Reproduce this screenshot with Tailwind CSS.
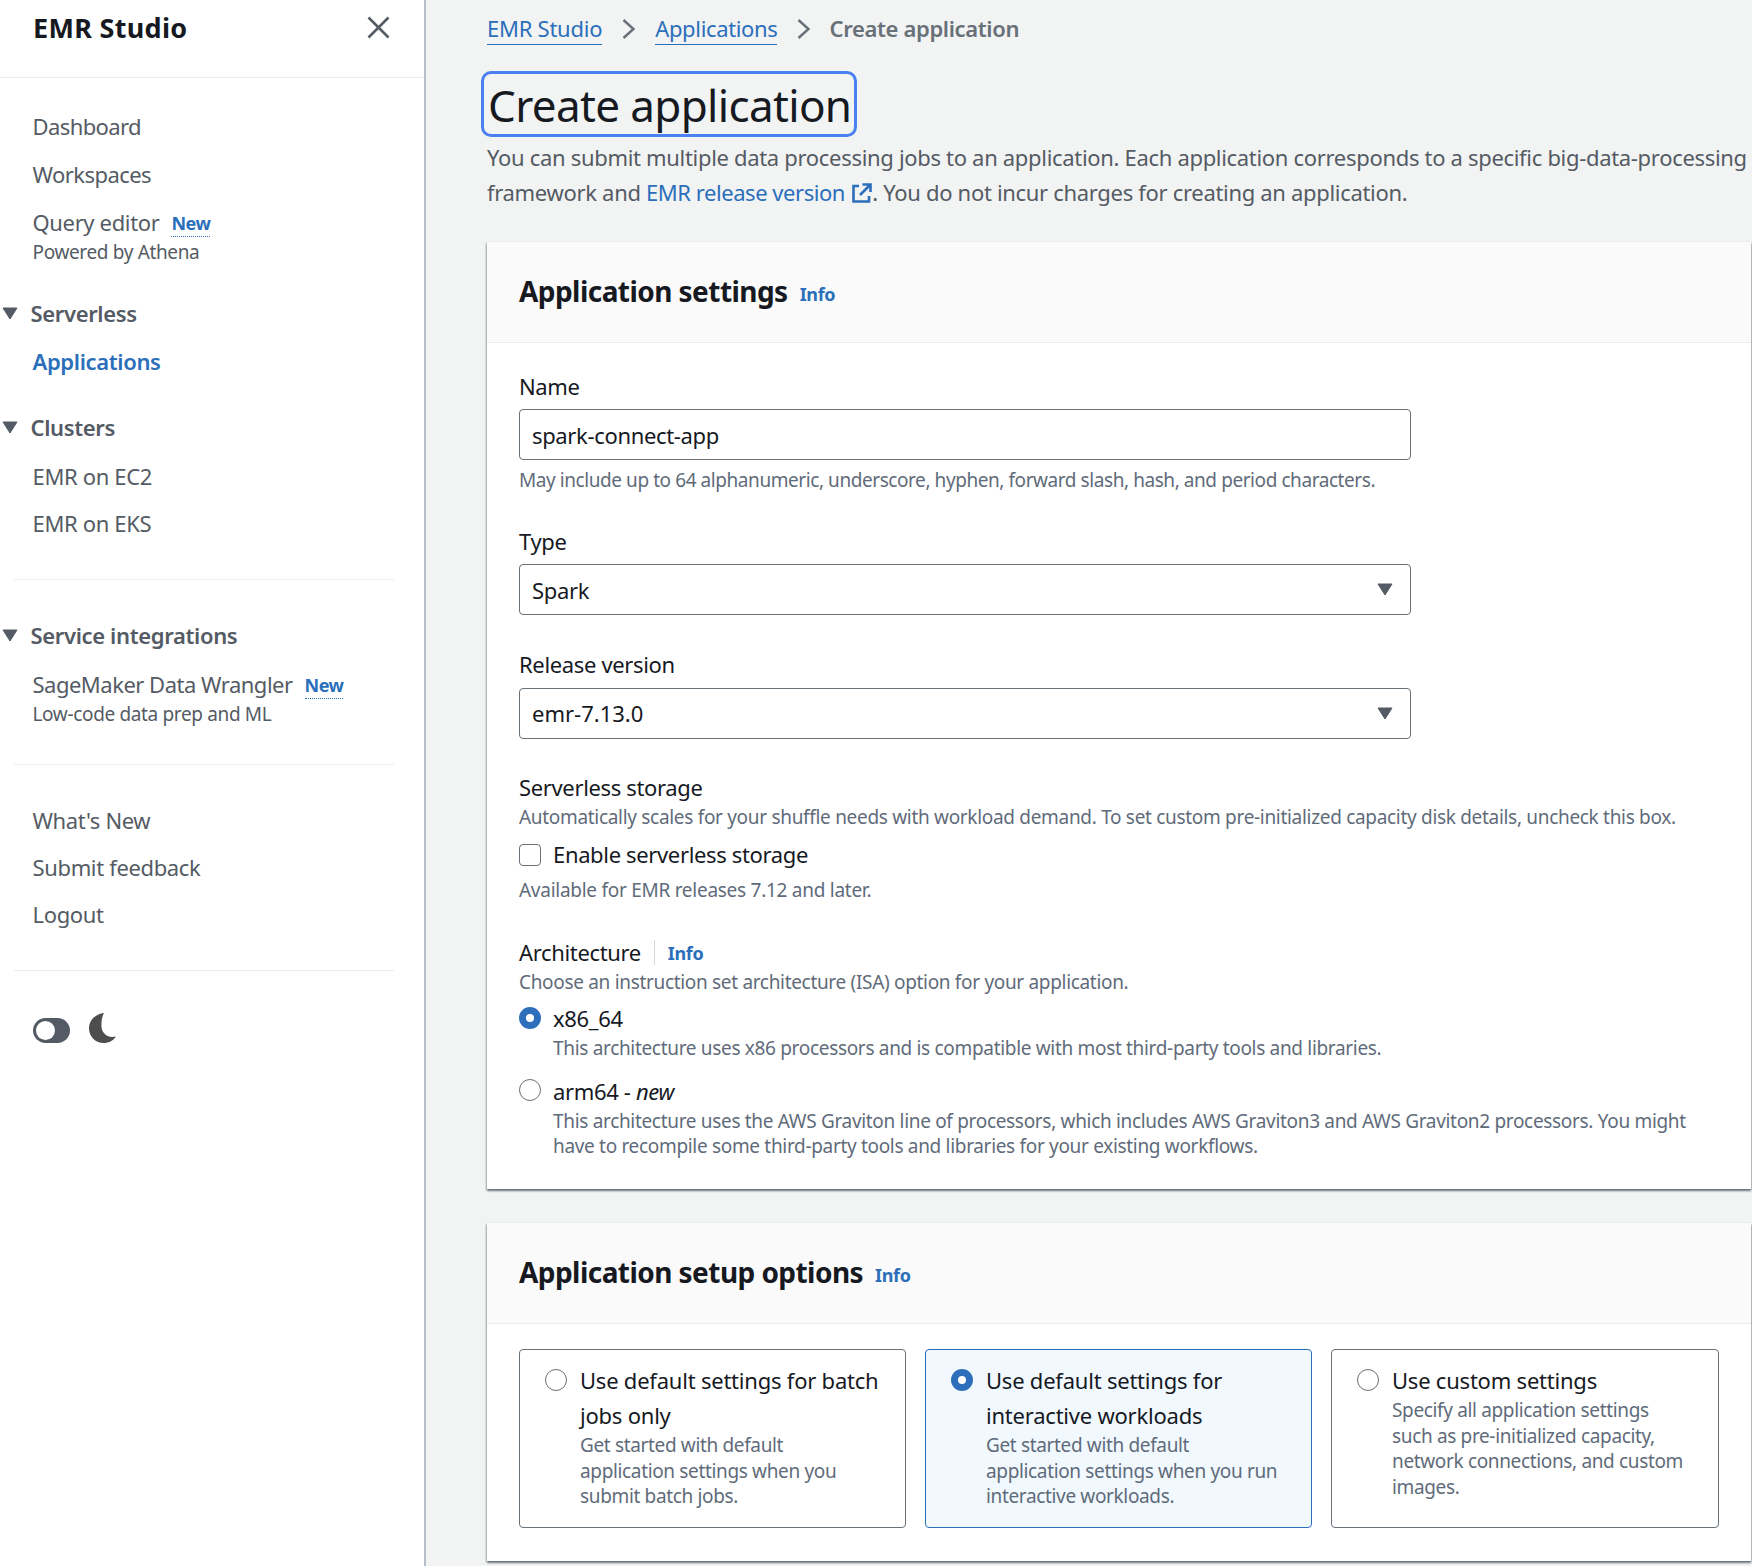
<!DOCTYPE html>
<html lang="en">
<head>
    <meta charset="UTF-8">
    <title>Create application</title>
    <script src="https://cdn.jsdelivr.net/npm/@tailwindcss/browser@4"></script>
</head>
<body class="font-['Noto_Sans',sans-serif] bg-[#f2f3f3] text-[#16191f] text-[22px] leading-[35px] tracking-[-0.35px] overflow-hidden">
<div class="flex h-[1566px] w-[1752px] overflow-hidden">

    <!-- side nav -->
    <aside class="w-[426px] shrink-0 bg-white border-r-2 border-[#b6bec9] text-[#545b64]">
        <div class="h-[78px] border-b border-[#eaeded] pl-[33px] pr-[34px] pt-[10px] flex justify-between items-start">
            <span class="text-[27px] leading-[35px] font-bold tracking-[0.3px] text-[#16191f]">EMR Studio</span>
            <button class="mt-[6px]">
                <svg class="w-[23px] h-[23px]" viewBox="0 0 23 23" fill="none" stroke="#545b64" stroke-width="2.6"><path d="M1.5 1.5l20 20M21.5 1.5l-20 20"/></svg>
            </button>
        </div>

        <nav class="pl-[32.5px] pt-[31px]">
            <a class="block tracking-[-0.6px]">Dashboard</a>
            <a class="block mt-[13px] tracking-[-0.55px]">Workspaces</a>
            <div class="mt-[13px] flex items-start gap-[12px]">
                <a>Query editor</a>
                <span class="text-[18px] font-bold tracking-[-0.5px] text-[#2b6fbb] border-b-[1.5px] border-dotted border-[#2b6fbb] leading-[25px] mt-[6px]">New</span>
            </div>
            <div class="text-[19px] leading-[25px]">Powered by Athena</div>
        </nav>

        <div class="mt-[31px] flex items-center pl-[2px] gap-[12.5px] font-semibold">
            <svg class="w-[16px] h-[13px]" viewBox="0 0 16 13" fill="#545b64" stroke="#545b64" stroke-linejoin="round"><path d="M1 1h14L8 12z"/></svg>
            <span>Serverless</span>
        </div>
        <a class="block mt-[13px] pl-[32.5px] font-semibold text-[#2b6fbb]">Applications</a>

        <div class="mt-[31px] flex items-center pl-[2px] gap-[12.5px] font-semibold">
            <svg class="w-[16px] h-[13px]" viewBox="0 0 16 13" fill="#545b64" stroke="#545b64" stroke-linejoin="round"><path d="M1 1h14L8 12z"/></svg>
            <span>Clusters</span>
        </div>
        <a class="block mt-[14px] pl-[32.5px]">EMR on EC2</a>
        <a class="block mt-[12px] pl-[32.5px]">EMR on EKS</a>

        <div class="mt-[38px] ml-[14px] mr-[30px] border-t border-[#eaeded]"></div>

        <div class="mt-[38px] flex items-center pl-[2px] gap-[12.5px] font-semibold">
            <svg class="w-[16px] h-[13px]" viewBox="0 0 16 13" fill="#545b64" stroke="#545b64" stroke-linejoin="round"><path d="M1 1h14L8 12z"/></svg>
            <span>Service integrations</span>
        </div>
        <div class="mt-[14px] pl-[32.5px] flex items-start gap-[12px]">
            <a class="tracking-[-0.5px]">SageMaker Data Wrangler</a>
            <span class="text-[18px] font-bold tracking-[-0.5px] text-[#2b6fbb] border-b-[1.5px] border-dotted border-[#2b6fbb] leading-[25px] mt-[6px]">New</span>
        </div>
        <div class="pl-[32.5px] text-[19px] leading-[25px]">Low-code data prep and ML</div>

        <div class="mt-[37px] ml-[14px] mr-[30px] border-t border-[#eaeded]"></div>

        <div class="pl-[32.5px] pt-[38px]">
            <a class="block">What's New</a>
            <a class="block mt-[12px]">Submit feedback</a>
            <a class="block mt-[12px]">Logout</a>
        </div>

        <div class="mt-[38px] ml-[14px] mr-[30px] border-t border-[#eaeded]"></div>

        <div class="mt-[43px] pl-[33px] flex items-center gap-[19px]">
            <div class="w-[37px] h-[25px] rounded-full bg-[#545b64] p-[3px] mt-[3px]">
                <div class="w-[19px] h-[19px] rounded-full bg-white"></div>
            </div>
            <svg class="w-[28px] h-[30px] -mt-[1px]" viewBox="0 0 28 30" fill="#4d4d4d"><path d="M15 0C6.500 1 0 7 0 15.500 0 24 7 30 14.500 30c5 0 9.500-2 12.500-6.500-8 2-14-3-14.500-9.500C12.200 8 13 3.500 15 0z"/></svg>
        </div>
    </aside>

    <!-- main content -->
    <main class="flex-1 pl-[61px] pr-px pt-[11px] text-[#545b64]">
        <div class="flex items-center">
            <a class="text-[#2b6fbb] border-b border-[#2b6fbb] leading-[32px] -mt-[1px] tracking-[-0.25px]">EMR Studio</a>
            <svg class="mx-[20px] w-[13px] h-[20px]" viewBox="0 0 13 20" fill="none" stroke="#687078" stroke-width="2.500"><path d="M1.500 1l10 9-10 9"/></svg>
            <a class="text-[#2b6fbb] border-b border-[#2b6fbb] leading-[32px] -mt-[1px]">Applications</a>
            <svg class="mx-[20px] w-[13px] h-[20px]" viewBox="0 0 13 20" fill="none" stroke="#687078" stroke-width="2.500"><path d="M1.500 1l10 9-10 9"/></svg>
            <span class="font-semibold text-[#687078] -ml-[1px]">Create application</span>
        </div>

        <h1 class="mt-[25px] -ml-[6px] w-[376px] h-[66px] border-[3px] border-[#4a80ef] rounded-[10px] pl-[4px] text-[44px] leading-[62px] tracking-[-0.65px] text-[#16191f] whitespace-nowrap">Create application</h1>

        <p class="mt-[3px] whitespace-nowrap tracking-[-0.315px]">You can submit multiple data processing jobs to an application. Each application corresponds to a specific big-data-processing<br>framework and <a class="text-[#2b6fbb] tracking-[-0.45px]">EMR release version <svg class="inline w-[20px] h-[20px] -mt-[4px] ml-[2px]" viewBox="0 0 20 20" fill="none" stroke="#2b6fbb" stroke-width="2.600"><path d="M7 3H1.500v15.500H17V13M10.500 1.500h8V9M18 2L8 12"/></svg></a>. You do not incur charges for creating an application.</p>

        <!-- application settings -->
        <section class="mt-[32px] bg-white shadow-[0_2px_2px_0_rgba(0,28,36,0.45),-1px_1px_2px_0_rgba(0,28,36,0.2),1px_1px_2px_0_rgba(0,28,36,0.2)]">
            <header class="h-[101px] bg-[#fafafa] border-b border-[#eaeded] pl-[32px] pt-[30px] flex items-start gap-[12px]">
                <h2 class="text-[28px] leading-[38px] font-bold tracking-[-0.55px] text-[#16191f]">Application settings</h2>
                <a class="text-[18px] font-bold text-[#2b6fbb] leading-[25px] mt-[10px]">Info</a>
            </header>
            <div class="pl-[32px] pr-[32px] pt-[26px] pb-[30px]">
                <label class="block text-[#16191f]">Name</label>
                <div class="mt-[5px] w-[892px] h-[51px] border-[1.5px] border-[#687078] rounded-[4px] px-[12px] text-[#16191f] leading-[50px]">spark-connect-app</div>
                <p class="mt-[8px] text-[19px] leading-[25px] tracking-[-0.43px] text-[#5f6b7a]">May include up to 64 alphanumeric, underscore, hyphen, forward slash, hash, and period characters.</p>

                <label class="block mt-[31px] text-[#16191f]">Type</label>
                <div class="mt-[5px] w-[892px] h-[51px] border-[1.5px] border-[#687078] rounded-[4px] pl-[12px] pr-[17px] text-[#16191f] leading-[48px] flex justify-between items-center">
                    <span>Spark</span>
                    <svg class="w-[16px] h-[13px]" viewBox="0 0 16 13" fill="#545b64" stroke="#545b64" stroke-linejoin="round"><path d="M1 1h14L8 12z"/></svg>
                </div>

                <label class="block mt-[32px] text-[#16191f]">Release version</label>
                <div class="mt-[6px] w-[892px] h-[51px] border-[1.5px] border-[#687078] rounded-[4px] pl-[12px] pr-[17px] text-[#16191f] leading-[46px] flex justify-between items-center">
                    <span class="-mt-[2px] tracking-[0px]">emr-7.13.0</span>
                    <svg class="w-[16px] h-[13px]" viewBox="0 0 16 13" fill="#545b64" stroke="#545b64" stroke-linejoin="round"><path d="M1 1h14L8 12z"/></svg>
                </div>

                <label class="block mt-[31px] text-[#16191f]">Serverless storage</label>
                <p class="text-[19px] leading-[25px] whitespace-nowrap tracking-[-0.31px] text-[#5f6b7a]">Automatically scales for your shuffle needs with workload demand. To set custom pre-initialized capacity disk details, uncheck this box.</p>
                <div class="mt-[7px] flex items-center gap-[12px] text-[#16191f]">
                    <span class="w-[22px] h-[22px] border-[1.5px] border-[#687078] rounded-[4px]"></span>
                    <span>Enable serverless storage</span>
                </div>
                <p class="mt-[6px] text-[19px] leading-[25px] tracking-[-0.27px] text-[#5f6b7a]">Available for EMR releases 7.12 and later.</p>

                <div class="mt-[32px] flex items-center text-[#16191f]">
                    <span>Architecture</span>
                    <span class="ml-[13px] h-[25px] border-l border-[#d5dbdb]"></span>
                    <a class="ml-[13px] mt-[1px] text-[18px] font-bold text-[#2b6fbb] leading-[25px]">Info</a>
                </div>
                <p class="text-[19px] leading-[25px] tracking-[-0.32px] text-[#5f6b7a]">Choose an instruction set architecture (ISA) option for your application.</p>

                <div class="mt-[6px] flex gap-[12px]">
                    <span class="mt-[6px] w-[22px] h-[22px] shrink-0 rounded-full border-[7px] border-[#2e6fbb] bg-white"></span>
                    <div>
                        <div class="text-[#16191f]">x86_64</div>
                        <p class="text-[19px] leading-[25px] tracking-[-0.32px] text-[#5f6b7a]">This architecture uses x86 processors and is compatible with most third-party tools and libraries.</p>
                    </div>
                </div>
                <div class="mt-[13px] flex gap-[12px]">
                    <span class="mt-[5px] w-[22px] h-[22px] shrink-0 rounded-full border-[1.5px] border-[#687078] bg-white"></span>
                    <div>
                        <div class="text-[#16191f]">arm64 - <em>new</em></div>
                        <p class="text-[19px] leading-[25px] tracking-[-0.32px] text-[#5f6b7a]">This architecture uses the AWS Graviton line of processors, which includes AWS Graviton3 and AWS Graviton2 processors. You might<br>have to recompile some third-party tools and libraries for your existing workflows.</p>
                    </div>
                </div>
            </div>
        </section>

        <!-- application setup options -->
        <section class="mt-[34px] bg-white shadow-[0_2px_2px_0_rgba(0,28,36,0.45),-1px_1px_2px_0_rgba(0,28,36,0.2),1px_1px_2px_0_rgba(0,28,36,0.2)]">
            <header class="h-[101px] bg-[#fafafa] border-b border-[#eaeded] pl-[32px] pt-[30px] flex items-start gap-[12px]">
                <h2 class="text-[28px] leading-[38px] font-bold tracking-[-0.55px] text-[#16191f]">Application setup options</h2>
                <a class="text-[18px] font-bold text-[#2b6fbb] leading-[25px] mt-[10px]">Info</a>
            </header>
            <div class="pl-[32px] pt-[25px] pb-[33px] flex gap-[19px]">
                <div class="w-[387px] h-[179px] border-[1.5px] border-[#687078] rounded-[4px] pl-[25px] pt-[13px] flex gap-[13px]">
                    <span class="mt-[6px] w-[22px] h-[22px] shrink-0 rounded-full border-[1.5px] border-[#687078] bg-white"></span>
                    <div>
                        <div class="text-[#16191f] tracking-[-0.22px]">Use default settings for batch<br>jobs only</div>
                        <p class="text-[19px] leading-[25.500px] text-[#5f6b7a]">Get started with default<br>application settings when you<br>submit batch jobs.</p>
                    </div>
                </div>
                <div class="w-[387px] h-[179px] border-[1.5px] border-[#2b6fbb] bg-[#f1f8fe] rounded-[4px] pl-[25px] pt-[13px] flex gap-[13px]">
                    <span class="mt-[6px] w-[22px] h-[22px] shrink-0 rounded-full border-[7px] border-[#2e6fbb] bg-white"></span>
                    <div>
                        <div class="text-[#16191f] tracking-[-0.22px]">Use default settings for<br>interactive workloads</div>
                        <p class="text-[19px] leading-[25.500px] text-[#5f6b7a]">Get started with default<br>application settings when you run<br>interactive workloads.</p>
                    </div>
                </div>
                <div class="w-[388px] h-[179px] border-[1.5px] border-[#687078] rounded-[4px] pl-[25px] pt-[13px] flex gap-[13px]">
                    <span class="mt-[6px] w-[22px] h-[22px] shrink-0 rounded-full border-[1.5px] border-[#687078] bg-white"></span>
                    <div>
                        <div class="text-[#16191f] tracking-[-0.22px]">Use custom settings</div>
                        <p class="text-[19px] leading-[25.500px] text-[#5f6b7a]">Specify all application settings<br>such as pre-initialized capacity,<br>network connections, and custom<br>images.</p>
                    </div>
                </div>
            </div>
        </section>
    </main>
</div>
</body>
</html>
